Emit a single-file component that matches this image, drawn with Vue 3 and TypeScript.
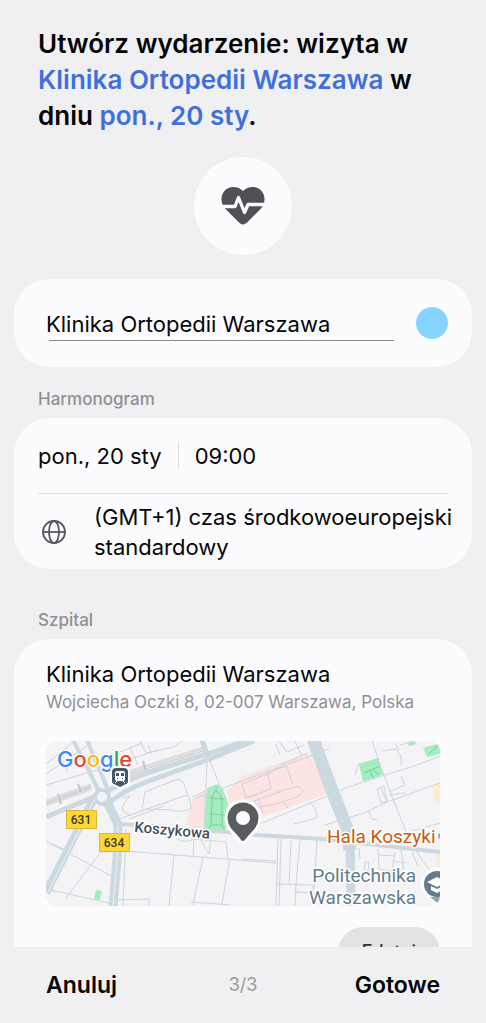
<script setup lang="ts">
import { ref } from 'vue'

interface RoadBadge {
  label: string
  x: number
  y: number
}

const clinic = 'Klinika Ortopedii Warszawa'
const title = ref<string>(clinic)
const day = 'pon., 20 sty'
const time = '09:00'
const timezone = '(GMT+1) czas środkowoeuropejski standardowy'
const address = 'Wojciecha Oczki 8, 02-007 Warszawa, Polska'

const badges: RoadBadge[] = [
  { label: '631', x: 20, y: 69 },
  { label: '634', x: 53, y: 92 },
]

const minorRoads: string[] = [
  'M0 23 29 0M0 33 44 3M0 44 58 27M12 14 22 30M31 5 46 31',
  'M64 15 96 2M66 24 112 9M94 0 100 12 128 6 136 0M84 6 92 24M102 4 106 13',
  'M96 68 99 51 129 39Q135 37 138 43L142 54Q145 60 145 68 132 72 126 69L99 68',
  'M77 57 84 55M83 56Q75 65 77 70L85 75M70 79 141 54M83 78 118 65',
  'M147 58 283 8M161 19 158 88M164 20 184 70M146 56 160 50',
  'M7 103 19 109 M0 100 65 135M54 94 60 104 20 157M0 148 72 164M0 139 8 152',
  'M79 110 230 122M80 88 77 165M128 114 123 165M157 116 147 164M148 98 147 114 M130 97Q137 103 148 98L180 101 182 118 M153 96 163 113 165 95M184 117 176 163M68 159 103 158 103 165M145 161 185 164 M230 120 196 118',
  'M232 97 230 165M235 98 233 165M245 99 243 143M254 100 250 143M231 143 267 144 267 153M250 143 249 165M250 151 278 153M271 99 268 148',
  'M211 84 284 54M279 84 318 72 341 61 394 42M284 53 317 41 368 25 394 15M262 12 234 24 M230 3 234 14M233 0 241 11 258 4M249 0 256 15',
  'M326 0 337 32 346 55 362 96 376 119 388 135M337 10 349 8Q357 14 355 24M354 4 370 0M349 2 353 10',
  'M331 48 335 62 341 60 338 45ZM335 47 341 61M345 50 359 44 355 35M343 54 359 52M322 69 326 78 331 79M313 22 309 34M262 62Q270 63 271 77L248 83',
  'M363 91 394 82M332 108 333 128 346 130 349 111M332 114 349 115M319 121 318 130 322 130 323 121ZM346 120 360 122M366 111 372 125M355 108 358 132M314 118 313 107',
]

const blockOutlines =
  'M196 43 226 31M196 43 200 57 225 48 221 29M200 57 211 54M208 60 238 49 249 46Q256 45 257 50L253 55 234 62 213 66ZM226 30 240 25 247 43M231 48 234 53M238 62 242 67M212 57 217 72'

const cancel = (): void => {
  title.value = clinic
}
</script>

<template>
  <main class="screen">
    <div class="content">
      <h1 class="heading">
        Utwórz wydarzenie: wizyta w <span class="accent">{{ clinic }}</span> w dniu
        <span class="accent">{{ day }}</span>.
      </h1>

      <div class="emblem">
        <svg class="heart" viewBox="0 0 44 38" aria-hidden="true">
          <path
            fill="#505055"
            d="M22 4C18.5 .7 15.5 0 12.5 0 5.5 0 .5 5.5.5 12c0 5 1.800 8 5.500 11.500L18 35.500c2.500 2.500 5.500 2.500 8 0L38 23.500c3.700-3.500 5.500-6.500 5.500-11.500C43.500 5.500 38.500 0 31.500 0 28.500 0 25.500.7 22 4Z"
          />
          <path
            d="M-1 19.500H14L17.500 10.500 23.500 25.500 27 17.500H45"
            fill="none"
            stroke="#fcfcfe"
            stroke-width="3.300"
            stroke-linejoin="round"
          />
        </svg>
      </div>

      <section class="card title-card">
        <input v-model="title" class="title-input" type="text" aria-label="Tytuł" />
        <button class="color-button" type="button" aria-label="Kolor wydarzenia"></button>
      </section>

      <h2 class="label">Harmonogram</h2>
      <section class="card schedule">
        <div class="when">
          <button class="plain" type="button">{{ day }}</button>
          <span class="separator"></span>
          <button class="plain" type="button">{{ time }}</button>
        </div>
        <button class="plain zone" type="button">
          <svg class="globe" viewBox="0 0 24 24" aria-hidden="true">
            <g fill="none" stroke="#56565b" stroke-width="1.800">
              <circle cx="12" cy="12" r="11" />
              <ellipse cx="12" cy="12" rx="5" ry="11" />
              <path d="M1 12H23" />
            </g>
          </svg>
          <span>{{ timezone }}</span>
        </button>
      </section>

      <h2 class="label place-label">Szpital</h2>
      <section class="card place">
        <h3 class="place-name">{{ clinic }}</h3>
        <p class="address">{{ address }}</p>

        <svg class="map" viewBox="0 0 394 165" preserveAspectRatio="xMidYMid slice" role="img" aria-label="Mapa">
          <rect width="394" height="165" fill="#f4f3f5" />
          <g fill="#fde3e2">
            <path d="M146 59 160 49 157 88 140 84Z" />
            <path d="M181 50 197 35 262 12 272 29 282 52 214 77 186 74Z" />
          </g>
          <g fill="#a4edbf">
            <path d="M161 47 172 43 177 48 182 62 180 91 158 90Z" />
            <path d="M313 23 332 17 337 34 317 40Z" />
            <path d="M377 7 394 2V13L381 16Z" />
            <path d="M362 1 366 0 371 3 363 5Z" />
            <path d="M50 149 56 150 54 159 48 158Z" />
          </g>
          <path d="M387 44 394 42V63L388 58ZM390 111H394V127H391Z" fill="#fbeccb" />

          <g fill="none" stroke="#cbd4db" stroke-width="1">
            <path v-for="d in minorRoads" :key="d" :d="d" />
          </g>
          <path :d="blockOutlines" fill="none" stroke="#d2ced6" stroke-width="1" />
          <g fill="none" stroke="#7bcaa0" stroke-width="1">
            <path d="M166 60Q166 52 170 50 175 52 176 60V84H165ZM163 57 178 58M163 73 179 74M170 50V46M165 84 162 88M176 84 178 88M318 32 334 25M324 29 327 37M327 28 332 34M383 13 392 4" />
          </g>

          <g fill="none" stroke="#dcdddf">
            <path d="M0 60 45 44M66 36 158 7M0 64 45 48M70 40 160 12" stroke-width="3" />
            <path d="M0 62 45 46M68 38 160 9" stroke="#c4c6ca" stroke-width="1" />
            <path d="M12 53 15 63M32 43 35 51M80 27 83 35M97 20 100 30" stroke="#c4c6ca" stroke-width="2" />
          </g>

          <g fill="none" stroke="#cdd9e0" stroke-linejoin="round">
            <path d="M0 76 48 56 62 50Q84 37 110 29L161 13 205-2" stroke-width="5" />
            <path d="M58 66Q76 50 100 41L161 19 208 0" stroke-width="5" />
            <path d="M27-1 54 52M41-1 62 49" stroke-width="4" />
            <path d="M156-1 162 16" stroke-width="5" />
            <path d="M48 57 0 152" stroke-width="8" />
            <path d="M61 60 72 84 71 118 67 166" stroke-width="9" />
            <path d="M71 83 91 84 181 91 211 94 277 98 394 111" stroke-width="4" />
            <path d="M267-2 284 44 300 85 304 109" stroke-width="13" />
            <path d="M304 100 305 166" stroke-width="9" />
            <circle cx="56" cy="56" r="7" fill="#f4f3f5" stroke-width="4" />
          </g>
          <g fill="none" stroke="#edf1f4" stroke-width="1">
            <path d="M49 58 1 153M72 84 71 118 67 166" />
          </g>

          <g v-for="badge in badges" :key="badge.label">
            <rect :x="badge.x + 0.5" :y="badge.y + 0.5" width="30" height="18" fill="#fdd835" stroke="#dcb53a" />
            <text class="badge-text" :x="badge.x + 15" :y="badge.y + 14" text-anchor="middle">{{ badge.label }}</text>
          </g>

          <text class="street" x="88" y="91" transform="rotate(5 88 91)">Koszykowa</text>
          <text class="poi food" x="281" y="102">Hala Koszyki</text>
          <circle cx="395" cy="95" r="3" fill="#9aa9b2" />
          <text class="poi school" x="370" y="141" text-anchor="end">Politechnika</text>
          <text class="poi school" x="370" y="163" text-anchor="end">Warszawska</text>

          <g>
            <path d="M391 127a16 16 0 0 1 0 32l-3 0 6 6V168L379 154a16 16 0 0 1 12-27Z" fill="#fff" />
            <path d="M384 156 394 164V156Z" fill="#90a4ae" />
            <circle cx="391" cy="143" r="13" fill="#607d8b" />
            <path d="M381 141 391 136 401 141 391 146Z" fill="#fff" />
            <path d="M385 145 391 148 397 145V149L391 152 385 149Z" fill="#fff" />
          </g>

          <text class="google" x="11" y="26">
            <tspan fill="#4285f4">G</tspan><tspan fill="#ea4335">o</tspan><tspan fill="#fbbc04">o</tspan><tspan fill="#4285f4">g</tspan><tspan fill="#34a853">l</tspan><tspan fill="#ea4335">e</tspan>
          </text>

          <g>
            <path d="M69 25H79Q84 25 84 30V41Q84 45 80 45L74 48 68 45Q64 45 64 41V30Q64 25 69 25Z" fill="#fff" />
            <path d="M70 27H78Q82 27 82 31V40Q82 43 79 43.500L74 46 69 43.500Q66 43 66 40V31Q66 27 70 27Z" fill="#455a69" />
            <rect x="69" y="30" width="10" height="10" rx="2" fill="#fff" />
            <path d="M70 32H73V35H70ZM75 32H78V35H75Z" fill="#455a69" />
            <path d="M71 37H72V38H71ZM76 37H77V38H76Z" fill="#455a69" />
            <path d="M71 40 69 42M77 40 79 42" stroke="#fff" />
          </g>

          <path
            d="M197 60a17 17 0 0 0-17 17c0 8 5 13 10 18l4 5q3 3 6 0l4-5c5-5 10-10 10-18a17 17 0 0 0-17-17Z"
            fill="#5b5b60"
            stroke="#fff"
            stroke-width="3"
          />
          <circle cx="197" cy="77" r="7" fill="#fff" />
        </svg>

        <button class="edit" type="button">Edytuj</button>
      </section>
    </div>

    <footer class="bar">
      <button class="action" type="button" @click="cancel">Anuluj</button>
      <span class="step">3/3</span>
      <button class="action end" type="button">Gotowe</button>
    </footer>
  </main>
</template>

<style>
body {
  background: #f0f0f2;
}
</style>

<style scoped>
.screen {
  display: flex;
  flex-direction: column;
  height: 100vh;
  background: #f0f0f2;
  color: #060608;
  font-family: Inter, "Liberation Sans", sans-serif;
  font-size: 22px;
  line-height: 30px;
}

.content {
  flex: 1;
  min-height: 0;
  overflow: hidden;
  padding: 26px 14px 0;
}

.heading {
  margin: 0 24px;
  font-size: 26px;
  font-weight: 600;
  line-height: 36px;
}

.accent {
  color: #3f70da;
}

.emblem {
  display: flex;
  align-items: center;
  justify-content: center;
  width: 98px;
  height: 98px;
  margin: 23px auto 24px;
  border-radius: 50%;
  background: #fcfcfe;
}

.heart {
  width: 44px;
  height: 38px;
}

.card {
  border-radius: 36px;
  background: #fcfcfe;
}

.title-card {
  display: flex;
  align-items: center;
  gap: 22px;
  padding: 26px 24px;
}

.title-input {
  flex: 1;
  min-width: 0;
  height: 36px;
  margin-left: 8px;
  padding: 2px 0 0;
  box-sizing: border-box;
  border: 0;
  outline: 0;
  background: linear-gradient(#8a8a8c, #8a8a8c) right bottom / calc(100% - 3px) 1px no-repeat;
  color: inherit;
  font: inherit;
}

.color-button {
  width: 32px;
  height: 32px;
  padding: 0;
  border: 0;
  border-radius: 50%;
  background: #87d3ff;
}

.label {
  margin: 20px 24px 7px;
  color: #8f8f92;
  font-size: 17px;
  font-weight: 500;
  line-height: 24px;
}

.plain {
  padding: 0;
  border: 0;
  background: none;
  color: inherit;
  font: inherit;
  text-align: left;
}

.schedule {
  padding: 0 24px 7px;
}

.when {
  display: flex;
  align-items: center;
  gap: 16px;
  height: 75px;
  border-bottom: 1px solid #dedee1;
}

.separator {
  width: 1px;
  height: 27px;
  background: #dedee1;
}

.zone {
  display: flex;
  align-items: center;
  gap: 28px;
  width: 100%;
  padding: 8px 0 0 4px;
}

.zone span {
  flex: 1;
  margin-right: -20px;
}

.globe {
  flex: none;
  width: 24px;
  height: 24px;
}

.place-label {
  margin-top: 39px;
}

.place {
  padding: 20px 32px 24px;
}

.place-name {
  margin: 0;
  font-size: 22px;
  font-weight: 400;
}

.address {
  margin: 0;
  color: #8f8f92;
  font-size: 17px;
  line-height: 26px;
}

.map {
  display: block;
  width: 100%;
  height: 165px;
  margin-top: 26px;
  border-radius: 10px;
}

.badge-text {
  fill: #3b3a2c;
  font: 500 12px Roboto, sans-serif;
}

.street {
  fill: #41505c;
  stroke: #fff;
  stroke-width: 3px;
  paint-order: stroke;
  font: 500 15px Roboto, sans-serif;
}

.poi {
  stroke: #fff;
  stroke-width: 3px;
  paint-order: stroke;
  font: 400 19px Roboto, sans-serif;
}

.food {
  fill: #c75b12;
}

.school {
  fill: #607d8b;
}

.google {
  stroke: #fff;
  stroke-width: 2px;
  paint-order: stroke;
  font: 500 22px Inter, sans-serif;
}

.edit {
  display: block;
  height: 50px;
  margin: 21px 0 0 auto;
  padding: 0 24px;
  border: 0;
  border-radius: 25px;
  background: #e3e3e5;
  color: #303033;
  font: inherit;
  font-size: 18px;
  font-weight: 500;
}

.bar {
  display: grid;
  grid-template-columns: 1fr auto 1fr;
  align-items: center;
  height: 76px;
  padding: 0 46px;
}

.action {
  justify-self: start;
  padding: 0;
  border: 0;
  background: none;
  color: inherit;
  font: inherit;
  font-size: 23px;
  font-weight: 600;
}

.end {
  justify-self: end;
}

.step {
  color: #9b9b9e;
  font-size: 18px;
}
</style>
